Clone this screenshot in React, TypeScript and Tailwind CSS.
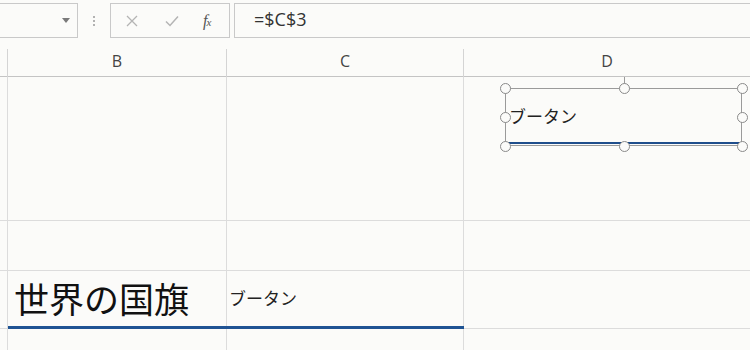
import React from "react";

const jp = { fontFamily: '"Noto Sans CJK JP", "Noto Sans", sans-serif' };
const ui = { fontFamily: '"Open Sans", "Noto Sans", sans-serif' };

function Handle({ className }: { className: string }) {
  return (
    <div
      className={`absolute h-[11px] w-[11px] rounded-full border-[1.5px] border-[#8a8a8a] bg-[#fbfbf9] ${className}`}
    />
  );
}

function Toolbar() {
  return (
    <div className="flex h-[40px] items-start pt-[3px]">
      <div className="flex h-[35px] w-[78px] items-center justify-end border border-l-0 border-[#c9c9c9] pr-[7px]">
        <div className="h-0 w-0 border-x-[4px] border-t-[5px] border-x-transparent border-t-[#7a7a7a]" />
      </div>
      <div className="flex h-[35px] w-[32px] flex-col items-center justify-center gap-[2px]">
        <span className="h-[2px] w-[2px] rounded-full bg-[#9a9a9a]" />
        <span className="h-[2px] w-[2px] rounded-full bg-[#9a9a9a]" />
        <span className="h-[2px] w-[2px] rounded-full bg-[#9a9a9a]" />
      </div>
      <div className="flex h-[35px] w-[120px] items-center border border-[#c9c9c9] pl-[15px]">
        <svg width="12" height="12" viewBox="0 0 12 12" className="mr-[27px]">
          <path d="M1 1 L11 11 M11 1 L1 11" stroke="#b4b4b4" strokeWidth="1.3" fill="none" />
        </svg>
        <svg width="14" height="12" viewBox="0 0 14 12" className="mr-[24px]">
          <path d="M1 6.5 L5 10.5 L13 1.5" stroke="#b4b4b4" strokeWidth="1.5" fill="none" />
        </svg>
        <span className="italic text-[#555]" style={{ fontFamily: '"Liberation Serif", serif' }}>
          <span className="text-[16px]">f</span>
          <span className="-ml-[1px] text-[11px]">x</span>
        </span>
      </div>
      <div className="ml-[4px] flex h-[35px] flex-1 items-center border border-r-0 border-[#c9c9c9] pl-[19px] pb-[3px]">
        <span className="text-[18px] text-[#333]" style={ui}>
          =$C$3
        </span>
      </div>
    </div>
  );
}

function HeaderRow() {
  return (
    <div className="grid h-[37px] grid-cols-[8px_219px_237px_1fr] border-b border-[#c4c4c4]">
      <div className="mt-[9px] border-r border-[#d4d4d4]" />
      <div className="mt-[9px] flex items-center justify-center border-r border-[#d4d4d4] pb-[12px] text-[16px] text-[#444]" style={ui}>
        B
      </div>
      <div className="mt-[9px] flex items-center justify-center border-r border-[#d4d4d4] pb-[12px] text-[16px] text-[#444]" style={ui}>
        C
      </div>
      <div className="mt-[9px] flex items-center justify-center pb-[12px] text-[16px] text-[#444]" style={ui}>
        D
      </div>
    </div>
  );
}

export default function App() {
  const line = "border-[#dcdcdc]";
  return (
    <div className="h-[350px] w-[750px] overflow-hidden bg-[#fbfbf9]">
      <Toolbar />
      <HeaderRow />
      <div className="grid grid-cols-[8px_219px_237px_1fr] grid-rows-[144px_50px_58px_40px]">
        {/* row 1 */}
        <div className={`border-r border-b ${line}`} />
        <div className={`border-r border-b ${line}`} />
        <div className={`border-r border-b ${line}`} />
        <div className={`relative border-b ${line}`}>
          <div className="absolute left-[160px] top-0 h-[7px] w-px bg-[#9a9a9a]" />
          <div className="absolute left-[41px] top-[11px] h-[58px] w-[237px] border border-[#9a9a9a]">
            <div className="absolute bottom-[1px] left-0 right-0 h-[2px] bg-[#1f4e8c]" />
            <div className="flex h-full items-center pl-[3px] pb-[2px] text-[17px] text-[#222]" style={jp}>
              ブータン
            </div>
          </div>
          <Handle className="left-[36px] top-[6px]" />
          <Handle className="left-[155px] top-[6px]" />
          <Handle className="left-[273px] top-[6px]" />
          <Handle className="left-[36px] top-[35px]" />
          <Handle className="left-[273px] top-[35px]" />
          <Handle className="left-[36px] top-[64px]" />
          <Handle className="left-[155px] top-[64px]" />
          <Handle className="left-[273px] top-[64px]" />
        </div>
        {/* row 2 */}
        <div className={`border-r border-b ${line}`} />
        <div className={`border-r border-b ${line}`} />
        <div className={`border-r border-b ${line}`} />
        <div className={`border-b ${line}`} />
        {/* row 3 */}
        <div className={`border-r border-b ${line}`} />
        <div className={`flex flex-col border-r ${line}`}>
          <div className="flex flex-1 items-center pl-[6px] pb-[3px]">
            <span className="text-[35px] leading-none text-[#111]" style={jp}>
              世界の国旗
            </span>
          </div>
          <div className="-mr-px h-[3px] bg-[#1f5393]" />
        </div>
        <div className={`flex flex-col border-r ${line}`}>
          <div className="flex flex-1 items-center pl-[2px] pb-[1px]">
            <span className="text-[17px] text-[#222]" style={jp}>
              ブータン
            </span>
          </div>
          <div className="-mr-px h-[3px] bg-[#1f5393]" />
        </div>
        <div className={`border-b ${line}`} />
        {/* row 4 */}
        <div className={`border-r ${line}`} />
        <div className={`border-r ${line}`} />
        <div className={`border-r ${line}`} />
        <div />
      </div>
    </div>
  );
}
